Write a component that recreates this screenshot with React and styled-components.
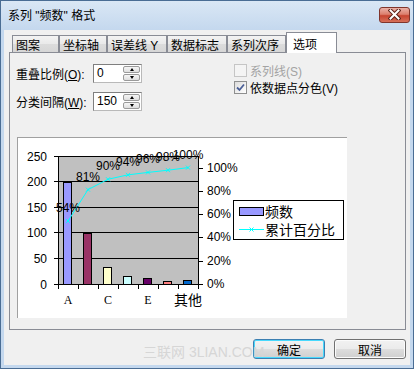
import styled, { createGlobalStyle } from "styled-components";

const GlobalStyle = createGlobalStyle`
  *, *::before, *::after {
    box-sizing: border-box;
  }
  html, body {
    margin: 0;
    padding: 0;
  }
  body {
    width: 414px;
    height: 369px;
    overflow: hidden;
    background: #c6d9ee;
    font-family: "Liberation Sans", "Noto Sans CJK SC", sans-serif;
    font-size: 12px;
    color: #000;
  }
`;

const CJK = `"Liberation Sans", "Noto Sans CJK SC", sans-serif`;

const Window = styled.div`
  width: 414px;
  height: 369px;
  display: flex;
  flex-direction: column;
  border: 1px solid #4a6d94;
  background: linear-gradient(to bottom, #dae7f5 0px, #c4d8ee 29px, #c4d8ee 100%);
`;

const TitleBar = styled.div`
  height: 29px;
  flex: none;
  display: flex;
  align-items: center;
  padding: 0 3px 2px 7px;
`;

const Title = styled.span`
  flex: 1;
  font-family: ${CJK};
  font-size: 12px;
`;

const CloseButton = styled.div`
  width: 31px;
  height: 16px;
  border: 1px solid #80352c;
  border-radius: 3px;
  background: linear-gradient(#eab0a6, #dc7f6d 45%, #c74430 55%, #d6705a);
  display: flex;
  align-items: center;
  justify-content: center;
`;

const Body = styled.div`
  position: relative;
  flex: 1;
  margin: 0 3px 3px 3px;
  background: #f0f0f0;
  display: flex;
  flex-direction: column;
  padding: 2px 4px 6px 5px;
`;

const TabRow = styled.div`
  height: 20px;
  display: flex;
  align-items: flex-end;
  padding-left: 3px;
`;

const Tab = styled.div`
  position: relative;
  z-index: ${(p) => (p.$active ? 1 : 0)};
  width: ${(p) => p.$w}px;
  height: ${(p) => (p.$active ? 21 : 17)}px;
  margin-bottom: ${(p) => (p.$active ? -1 : 0)}px;
  border: 1px solid #898c95;
  border-bottom: none;
  background: ${(p) =>
    p.$active
      ? "#ffffff"
      : "linear-gradient(#f3f3f3, #e9e9e9 50%, #dcdcdc 51%, #d6d6d6)"};
  display: flex;
  align-items: center;
  padding-left: ${(p) => (p.$active ? 6 : 3)}px;
  font-family: ${CJK};
  font-size: 12px;
  white-space: nowrap;
`;

const Panel = styled.div`
  height: 278px;
  border: 1px solid #898c95;
  background: #f0f0f0;
  display: flex;
  flex-direction: column;
`;

const TopArea = styled.div`
  height: 84px;
  display: flex;
`;

const LeftForm = styled.div`
  width: 224px;
  display: flex;
  flex-direction: column;
  gap: 9px;
  padding: 11px 0 0 6px;
`;

const FormRow = styled.div`
  height: 19px;
  display: flex;
  align-items: center;
`;

const FieldLabel = styled.span`
  width: 77px;
  font-family: ${CJK};
  font-size: 12px;
  white-space: nowrap;
  u {
    text-decoration: underline;
  }
`;

const SpinBox = styled.div`
  width: 49px;
  height: 19px;
  display: flex;
  align-items: stretch;
  background: #fff;
  border: 1px solid #7f7f7f;
  border-right-color: #b9b9b9;
  border-bottom-color: #b9b9b9;
  padding: 1px;
`;

const SpinValue = styled.span`
  flex: 1;
  padding-left: 2px;
  font-size: 12px;
  line-height: 15px;
`;

const SpinButtons = styled.div`
  width: 17px;
  display: flex;
  flex-direction: column;
  gap: 1px;
`;

const SpinButton = styled.div`
  flex: 1;
  border: 1px solid #9a9a9a;
  border-radius: 2px;
  background: linear-gradient(#f6f6f6, #dedede);
  display: flex;
  align-items: center;
  justify-content: center;
`;

const Arrow = styled.span`
  width: 0;
  height: 0;
  border-left: 2.5px solid transparent;
  border-right: 2.5px solid transparent;
  ${(p) =>
    p.$up ? "border-bottom: 3px solid #000;" : "border-top: 3px solid #000;"}
`;

const RightChecks = styled.div`
  display: flex;
  flex-direction: column;
  gap: 1px;
  padding-top: 9px;
`;

const CheckRow = styled.label`
  height: 16px;
  display: flex;
  align-items: center;
  gap: 3px;
  font-family: ${CJK};
  font-size: 12px;
  color: ${(p) => (p.$disabled ? "#a3a3a3" : "#000")};
`;

const CheckBox = styled.span`
  width: 13px;
  height: 13px;
  border: 1px solid ${(p) => (p.$disabled ? "#c5c5c5" : "#8e8f8f")};
  background: ${(p) =>
    p.$disabled ? "#f4f4f4" : "linear-gradient(135deg, #dcdcdc, #ffffff)"};
  display: flex;
  align-items: center;
  justify-content: center;
`;

const ChartBox = styled.div`
  width: 330px;
  height: 181px;
  margin-left: 7px;
  background: #fff;
  border-top: 1px solid #a0a0a0;
  border-left: 1px solid #a0a0a0;
`;

const Footer = styled.div`
  margin-top: 9px;
  display: flex;
  justify-content: flex-end;
  gap: 9px;
`;

const Button = styled.div`
  width: 72px;
  height: 20px;
  border-radius: 3px;
  border: 1px solid ${(p) => (p.$default ? "#3c7fb1" : "#707070")};
  box-shadow: ${(p) =>
    p.$default ? "inset 0 0 0 1px #48d9fd" : "inset 0 0 0 1px #fbfbfb"};
  background: linear-gradient(#f2f2f2, #ebebeb 50%, #dddddd 51%, #cfcfcf);
  display: flex;
  align-items: center;
  justify-content: center;
  font-family: ${CJK};
  font-size: 12px;
`;

const Watermark = styled.div`
  position: absolute;
  left: 139px;
  top: 314px;
  font-family: ${CJK};
  font-size: 14px;
  line-height: 16px;
  color: #d6d6d6;
  pointer-events: none;
  white-space: nowrap;
`;

const tabs = [
  { label: "图案", w: 47 },
  { label: "坐标轴", w: 48 },
  { label: "误差线 Y", w: 60 },
  { label: "数据标志", w: 60 },
  { label: "系列次序", w: 59 },
  { label: "选项", w: 51, active: true },
];

const gridY = [18, 43, 69, 94, 120, 146];
const leftLabels = ["250", "200", "150", "100", "50", "0"];
const pctTicks = [0, 20, 40, 60, 80, 100];
const pctY = (p) => 146 - p * (128 / 110);

const bars = [
  { h: 102, c: "#9999ff" },
  { h: 51, c: "#993366" },
  { h: 17, c: "#ffffcc" },
  { h: 8, c: "#ccffff" },
  { h: 6, c: "#660066" },
  { h: 3, c: "#ff8080" },
  { h: 4, c: "#0066cc" },
];

const cumulative = [
  { p: 54.05, t: "54%" },
  { p: 81.08, t: "81%" },
  { p: 90, t: "90%" },
  { p: 93.8, t: "94%" },
  { p: 95.9, t: "96%" },
  { p: 97.8, t: "98%" },
  { p: 100, t: "100%" },
];

const SANS = "Liberation Sans, Noto Sans CJK SC, sans-serif";

function Cross({ x, y }) {
  return (
    <path
      d={`M${x - 2} ${y - 2}L${x + 2} ${y + 2}M${x - 2} ${y + 2}L${x + 2} ${y - 2}`}
      stroke="#00ffff"
      strokeWidth="1"
    />
  );
}

function ParetoChart() {
  const pts = cumulative.map((d, i) => ({ x: 50 + i * 20, y: pctY(d.p), t: d.t }));
  return (
    <svg width="329" height="180" viewBox="0 0 329 180">
      <rect x="40" y="18" width="140" height="128" fill="#c0c0c0" />
      <g stroke="#000" strokeWidth="1" shapeRendering="crispEdges">
        {gridY.map((y) => (
          <line key={y} x1="36" y1={y + 0.5} x2="180" y2={y + 0.5} />
        ))}
        <line x1="40.5" y1="18" x2="40.5" y2="147" />
        <line x1="180.5" y1="18" x2="180.5" y2="147" />
        {Array.from({ length: 8 }, (_, i) => (
          <line key={i} x1={40.5 + i * 20} y1="146" x2={40.5 + i * 20} y2="151" />
        ))}
        {pctTicks.map((p) => (
          <line key={p} x1="180" y1={Math.round(pctY(p)) + 0.5} x2="185" y2={Math.round(pctY(p)) + 0.5} />
        ))}
      </g>
      <g shapeRendering="crispEdges">
        {bars.map((b, i) => (
          <rect
            key={i}
            x={45.5 + i * 20}
            y={146.5 - b.h}
            width="8"
            height={b.h}
            fill={b.c}
            stroke="#000"
          />
        ))}
      </g>
      <polyline
        points={pts.map((p) => `${p.x},${p.y}`).join(" ")}
        fill="none"
        stroke="#00ffff"
        strokeWidth="1"
      />
      {pts.map((p, i) => (
        <Cross key={i} x={p.x} y={p.y} />
      ))}
      <g fontFamily={SANS} fontSize="12" fill="#000">
        {pts.map((p, i) => (
          <text key={i} x={p.x} y={p.y - 13} textAnchor="middle" dominantBaseline="central">
            {p.t}
          </text>
        ))}
        {leftLabels.map((t, i) => (
          <text key={t} x="29" y={gridY[i] + 0.5} textAnchor="end" dominantBaseline="central">
            {t}
          </text>
        ))}
        {pctTicks.map((p) => (
          <text key={p} x="189" y={pctY(p)} dominantBaseline="central">
            {p}%
          </text>
        ))}
      </g>
      <g fontFamily="Liberation Serif, serif" fontSize="12">
        <text x="50" y="162" textAnchor="middle" dominantBaseline="central">A</text>
        <text x="90" y="162" textAnchor="middle" dominantBaseline="central">C</text>
        <text x="130" y="162" textAnchor="middle" dominantBaseline="central">E</text>
      </g>
      <text x="170" y="162" textAnchor="middle" dominantBaseline="central" fontFamily={SANS} fontSize="14">
        其他
      </text>
      <rect x="215.5" y="62.5" width="110" height="39" fill="#fff" stroke="#000" shapeRendering="crispEdges" />
      <rect x="221.5" y="69.5" width="24" height="8" fill="#9999ff" stroke="#000" shapeRendering="crispEdges" />
      <line x1="221" y1="91.5" x2="246" y2="91.5" stroke="#00ffff" />
      <Cross x={233.5} y={91.5} />
      <g fontFamily={SANS} fontSize="14">
        <text x="247" y="74" dominantBaseline="central">频数</text>
        <text x="247" y="92" dominantBaseline="central">累计百分比</text>
      </g>
    </svg>
  );
}

export default function App() {
  return (
    <>
      <GlobalStyle />
      <Window>
        <TitleBar>
          <Title>系列 "频数" 格式</Title>
          <CloseButton>
            <svg width="13" height="11" viewBox="0 0 13 11">
              <path d="M2.5 1.5L10.5 9.5M10.5 1.5L2.5 9.5" stroke="#5a2018" strokeWidth="4" strokeLinecap="square" />
              <path d="M2.5 1.5L10.5 9.5M10.5 1.5L2.5 9.5" stroke="#ffffff" strokeWidth="2" strokeLinecap="square" />
            </svg>
          </CloseButton>
        </TitleBar>
        <Body>
          <TabRow>
            {tabs.map((t) => (
              <Tab key={t.label} $w={t.w} $active={t.active}>
                {t.label}
              </Tab>
            ))}
          </TabRow>
          <Panel>
            <TopArea>
              <LeftForm>
                <FormRow>
                  <FieldLabel>
                    重叠比例(<u>O</u>):
                  </FieldLabel>
                  <SpinBox>
                    <SpinValue>0</SpinValue>
                    <SpinButtons>
                      <SpinButton>
                        <Arrow $up />
                      </SpinButton>
                      <SpinButton>
                        <Arrow />
                      </SpinButton>
                    </SpinButtons>
                  </SpinBox>
                </FormRow>
                <FormRow>
                  <FieldLabel>
                    分类间隔(<u>W</u>):
                  </FieldLabel>
                  <SpinBox>
                    <SpinValue>150</SpinValue>
                    <SpinButtons>
                      <SpinButton>
                        <Arrow $up />
                      </SpinButton>
                      <SpinButton>
                        <Arrow />
                      </SpinButton>
                    </SpinButtons>
                  </SpinBox>
                </FormRow>
              </LeftForm>
              <RightChecks>
                <CheckRow $disabled>
                  <CheckBox $disabled />
                  系列线(S)
                </CheckRow>
                <CheckRow>
                  <CheckBox>
                    <svg width="9" height="9" viewBox="0 0 9 9">
                      <path d="M1 4.5L3.5 7L8 1.5" fill="none" stroke="#4a5f97" strokeWidth="1.8" />
                    </svg>
                  </CheckBox>
                  依数据点分色(V)
                </CheckRow>
              </RightChecks>
            </TopArea>
            <ChartBox>
              <ParetoChart />
            </ChartBox>
          </Panel>
          <Footer>
            <Button $default>确定</Button>
            <Button>取消</Button>
          </Footer>
          <Watermark>三联网 3LIAN.COM</Watermark>
        </Body>
      </Window>
    </>
  );
}
